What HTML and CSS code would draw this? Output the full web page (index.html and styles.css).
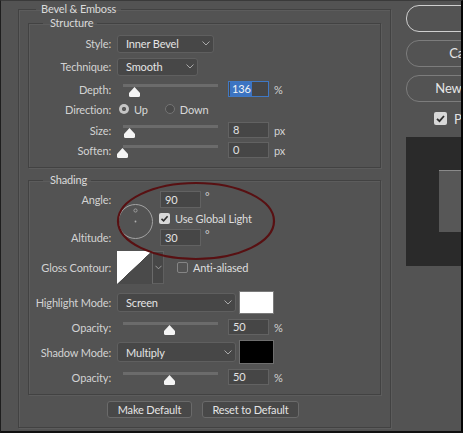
FILE: index.html
```html
<!DOCTYPE html>
<html lang="en">
<head>
<meta charset="utf-8">
<title>Layer Style - Bevel &amp; Emboss</title>
<link rel="stylesheet" href="styles.css">
</head>
<body>
<div class="frame">
  <div class="left">
    <fieldset class="group outer">
      <legend class="lg-outer">Bevel &amp; Emboss</legend>

      <fieldset class="group inner structure">
        <legend class="lg-inner">Structure</legend>

        <div class="row r-style">
          <span class="lbl">Style:</span>
          <div class="select w-style"><span class="sel-text">Inner Bevel</span><svg class="chev" viewBox="0 0 8 5"><polyline points="0.5,0.5 4,4 7.5,0.5"/></svg></div>
        </div>

        <div class="row r-tech">
          <span class="lbl">Technique:</span>
          <div class="select w-tech"><span class="sel-text">Smooth</span><svg class="chev" viewBox="0 0 8 5"><polyline points="0.5,0.5 4,4 7.5,0.5"/></svg></div>
        </div>

        <div class="row r-depth">
          <span class="lbl">Depth:</span>
          <div class="slider"><div class="track"></div><svg class="thumb" style="left:12px" viewBox="0 0 11 10"><path d="M5.5 0 L11 6 L11 8.5 Q11 10 9.5 10 L1.5 10 Q0 10 0 8.5 L0 6 Z"/></svg></div>
          <div class="num focus"><span class="sel">136</span></div>
          <span class="unit">%</span>
        </div>

        <div class="row r-dir">
          <span class="lbl">Direction:</span>
          <span class="radio on"></span><span class="rtext up">Up</span>
          <span class="radio off"></span><span class="rtext">Down</span>
        </div>

        <div class="row r-size">
          <span class="lbl">Size:</span>
          <div class="slider"><div class="track"></div><svg class="thumb" style="left:7px" viewBox="0 0 11 10"><path d="M5.5 0 L11 6 L11 8.5 Q11 10 9.5 10 L1.5 10 Q0 10 0 8.5 L0 6 Z"/></svg></div>
          <div class="num">8</div>
          <span class="unit">px</span>
        </div>

        <div class="row r-soft">
          <span class="lbl">Soften:</span>
          <div class="slider"><div class="track"></div><svg class="thumb" style="left:0px" viewBox="0 0 11 10"><path d="M5.5 0 L11 6 L11 8.5 Q11 10 9.5 10 L1.5 10 Q0 10 0 8.5 L0 6 Z"/></svg></div>
          <div class="num">0</div>
          <span class="unit">px</span>
        </div>
      </fieldset>

      <fieldset class="group inner shading">
        <legend class="lg-inner">Shading</legend>

        <div class="angle-grid">
          <span class="lbl g-angle">Angle:</span>
          <svg class="dial" viewBox="0 0 37 37"><circle cx="18.5" cy="18.5" r="17" class="dial-ring"/><circle cx="18.5" cy="7.5" r="1.6" class="dial-knob"/><circle cx="18.5" cy="18.5" r="0.9" class="dial-dot"/></svg>
          <div class="num g-angle-in">90</div>
          <span class="deg g-angle-deg">°</span>
          <div class="g-global"><span class="cb checked"><svg viewBox="0 0 11 11"><polyline points="2.5,5.8 4.6,7.8 8.6,3.2"/></svg></span><span class="cbtext">Use Global Light</span></div>
          <span class="lbl g-alt">Altitude:</span>
          <div class="num g-alt-in">30</div>
          <span class="deg g-alt-deg">°</span>
        </div>

        <div class="row r-contour">
          <span class="lbl">Gloss Contour:</span>
          <div class="contour"><div class="curve"></div><div class="curve-drop"><svg class="chev" viewBox="0 0 8 5"><polyline points="0.5,0.5 4,4 7.5,0.5"/></svg></div></div>
          <span class="cb empty"></span><span class="cbtext">Anti-aliased</span>
        </div>

        <div class="row r-hmode">
          <span class="lbl">Highlight Mode:</span>
          <div class="select w-mode"><span class="sel-text">Screen</span><svg class="chev" viewBox="0 0 8 5"><polyline points="0.5,0.5 4,4 7.5,0.5"/></svg></div>
          <div class="swatch white"></div>
        </div>

        <div class="row r-op1">
          <span class="lbl">Opacity:</span>
          <div class="slider"><div class="track"></div><svg class="thumb" style="left:47px" viewBox="0 0 11 10"><path d="M5.5 0 L11 6 L11 8.5 Q11 10 9.5 10 L1.5 10 Q0 10 0 8.5 L0 6 Z"/></svg></div>
          <div class="num">50</div>
          <span class="unit">%</span>
        </div>

        <div class="row r-smode">
          <span class="lbl">Shadow Mode:</span>
          <div class="select w-mode tall"><span class="sel-text">Multiply</span><svg class="chev" viewBox="0 0 8 5"><polyline points="0.5,0.5 4,4 7.5,0.5"/></svg></div>
          <div class="swatch black"></div>
        </div>

        <div class="row r-op2">
          <span class="lbl">Opacity:</span>
          <div class="slider"><div class="track"></div><svg class="thumb" style="left:47px" viewBox="0 0 11 10"><path d="M5.5 0 L11 6 L11 8.5 Q11 10 9.5 10 L1.5 10 Q0 10 0 8.5 L0 6 Z"/></svg></div>
          <div class="num">50</div>
          <span class="unit">%</span>
        </div>
      </fieldset>

      <div class="btnrow">
        <button class="btn b-make">Make Default</button>
        <button class="btn b-reset">Reset to Default</button>
      </div>
    </fieldset>
  </div>

  <div class="right">
    <div class="pill primary">OK</div>
    <div class="pill">Cancel</div>
    <div class="pill">New Style...</div>
    <div class="preview-row"><span class="cb checked big"><svg viewBox="0 0 13 13"><polyline points="3,6.8 5.5,9.2 10,4"/></svg></span><span class="ptext">Preview</span></div>
    <div class="preview"><div class="preview-swatch"></div></div>
  </div>

  <svg class="mark" viewBox="0 0 160 80"><ellipse cx="80" cy="40" rx="78" ry="38"/></svg>
</div>
</body>
</html>
```

FILE: styles.css
```css
html, body {
  margin: 0;
  padding: 0;
  background: #535353;
}

body {
  font-family: "Lato", "Liberation Sans", sans-serif;
  font-size: 11px;
  letter-spacing: -0.15px;
  color: #d4d4d4;
}

.frame {
  position: relative;
  width: 463px;
  height: 433px;
  box-sizing: border-box;
  border-top: 1px solid #3a3a3a;
  border-left: 1px solid #1e1e1e;
  border-right: 2px solid #050505;
  border-bottom: 2px solid #101010;
  background: #535353;
  display: flex;
  align-items: flex-start;
  overflow: hidden;
}

/* ---------- fieldsets ---------- */
.group {
  margin: 0;
  min-width: 0;
  border: 1px solid #424242;
  box-shadow: 1px 1px 0 #5c5c5c, inset 1px 1px 0 #5c5c5c;
}

.group legend {
  line-height: 14px;
  height: 14px;
  color: #dadada;
  font-size: 11px;
}

.outer {
  margin: 1px 0 0 17px;
  width: 373px;
  box-sizing: border-box;
  padding: 0 9px 9px 9px;
  flex-shrink: 0;
}

.lg-outer {
  margin-left: 8px;
  padding: 0 5px;
}

.inner {
  width: 353px;
  box-sizing: border-box;
  padding: 0 0 9px 0;
}

.lg-inner {
  margin-left: 14px;
  padding: 0 4px 0 7px;
}

.shading {
  margin-top: 5px;
}

/* ---------- rows ---------- */
.row {
  display: flex;
  align-items: center;
}

.lbl {
  width: 82px;
  margin-right: 6px;
  text-align: right;
  flex-shrink: 0;
  white-space: nowrap;
  color: #d2d2d2;
}

.r-style { margin-top: 4px; height: 19px; }
.r-tech  { margin-top: 4px; height: 19px; }
.r-depth { margin-top: 5px; height: 16px; }
.r-dir   { margin-top: 4px; height: 16px; }
.r-size  { margin-top: 5px; height: 16px; }
.r-soft  { margin-top: 4px; height: 16px; }

.r-contour { margin-top: 5px; height: 33px; }
.r-hmode   { margin-top: 7px; height: 23px; }
.r-op1     { margin-top: 5px; height: 16px; }
.r-smode   { margin-top: 5px; height: 24px; }
.r-op2     { margin-top: 5px; height: 16px; }

/* ---------- select ---------- */
.select {
  box-sizing: border-box;
  height: 18px;
  background: #474747;
  border: 1px solid #5f5f5f;
  border-radius: 3px;
  display: flex;
  align-items: center;
  justify-content: space-between;
  padding: 0 3px 0 8px;
  color: #e4e4e4;
}

.select.tall { height: 20px; }

.w-style { width: 97px; }
.w-tech  { width: 81px; }
.w-mode  { width: 119px; height: 19px; }

.chev {
  width: 8px;
  height: 5px;
  fill: none;
  stroke: #a9a9a9;
  stroke-width: 1;
}

/* ---------- slider ---------- */
.slider {
  position: relative;
  width: 105px;
  height: 16px;
  flex-shrink: 0;
}

.track {
  margin: 3px 0 0 6px;
  width: 95px;
  height: 3px;
  background: #6b6b6b;
}

.thumb {
  position: absolute;
  top: 6px;
  width: 11px;
  height: 10px;
  fill: #f4f4f4;
}

/* ---------- numeric inputs ---------- */
.num {
  box-sizing: border-box;
  width: 41px;
  height: 16px;
  margin-left: 6px;
  background: #464646;
  border: 1px solid #626262;
  padding-left: 4px;
  line-height: 14px;
  color: #e2e2e2;
  flex-shrink: 0;
}

.num.focus {
  border-color: #3f78c4;
  padding-left: 1px;
}

.sel {
  display: inline-block;
  background: #3c74c2;
  color: #f4f4f4;
  padding: 0 1px 0 2px;
  line-height: 14px;
}

.unit {
  margin-left: 5px;
  color: #d2d2d2;
}

/* ---------- radios ---------- */
.radio {
  box-sizing: border-box;
  width: 10px;
  height: 10px;
  border-radius: 50%;
  flex-shrink: 0;
}

.radio.on {
  margin-left: 2px;
  background: radial-gradient(circle, #595959 0 1.8px, #c4c4c4 2.4px);
}

.radio.off {
  margin-left: 17px;
  border: 1px solid #747474;
  background: #4a4a4a;
}

.rtext { margin-left: 5px; color: #d8d8d8; }
.rtext.up { margin-left: 5px; }

/* ---------- angle block ---------- */
.angle-grid {
  margin-top: 4px;
  display: grid;
  grid-template-columns: 82px 37px 41px auto;
  grid-template-rows: 17px 15px 17px;
  column-gap: 6px;
  row-gap: 3px;
  align-items: center;
}

.angle-grid .lbl { width: auto; margin-right: 0; }

.g-angle { grid-column: 1; grid-row: 1; }
.g-alt   { grid-column: 1; grid-row: 3; }

.dial {
  grid-column: 2;
  grid-row: 1 / 4;
  width: 37px;
  height: 37px;
  margin-top: 6px;
}

.dial-ring { fill: none; stroke: #a3a3a3; stroke-width: 1; }
.dial-knob { fill: none; stroke: #a3a3a3; stroke-width: 0.9; }
.dial-dot  { fill: #b0b0b0; }

.angle-grid .num {
  margin-left: 0;
  height: 17px;
  line-height: 15px;
}

.g-angle-in { grid-column: 3; grid-row: 1; }
.g-alt-in   { grid-column: 3; grid-row: 3; }

.deg {
  align-self: start;
  margin-left: -2px;
  line-height: 11px;
  color: #d2d2d2;
}

.g-angle-deg { grid-column: 4; grid-row: 1; }
.g-alt-deg   { grid-column: 4; grid-row: 3; }

.g-global {
  grid-column: 3 / 5;
  grid-row: 2;
  display: flex;
  align-items: center;
  margin-left: -1px;
  white-space: nowrap;
}

/* ---------- checkboxes ---------- */
.cb {
  box-sizing: border-box;
  width: 11px;
  height: 11px;
  border-radius: 2px;
  flex-shrink: 0;
  display: inline-flex;
}

.cb svg {
  width: 100%;
  height: 100%;
  fill: none;
  stroke: #2e2e2e;
  stroke-width: 1.6;
}

.cb.checked { background: #d8d8d8; }

.cb.empty {
  margin-left: 13px;
  border: 1px solid #858585;
}

.cb.big {
  width: 13px;
  height: 13px;
  border-radius: 2px;
}

.cb.big svg { stroke-width: 1.8; }

.cbtext {
  margin-left: 5px;
  color: #dedede;
  white-space: nowrap;
}

/* ---------- contour ---------- */
.contour {
  display: flex;
  height: 33px;
  width: 47px;
  box-sizing: border-box;
  flex-shrink: 0;
}

.curve {
  position: relative;
  width: 35px;
  height: 33px;
  background: linear-gradient(to bottom right, #ffffff 0 49.5%, #4a4a4a 50.5% 100%);
}

.curve::after {
  content: "";
  position: absolute;
  right: 0;
  top: 0;
  width: 2px;
  height: 1px;
  background: #d0302a;
}

.curve-drop {
  width: 12px;
  box-sizing: border-box;
  border: 1px solid #606060;
  border-left-color: #6a6a6a;
  background: #474747;
  display: flex;
  align-items: center;
  justify-content: center;
}

.curve-drop .chev { width: 7px; }

/* ---------- swatches ---------- */
.swatch {
  box-sizing: border-box;
  width: 35px;
  margin-left: 3px;
  border: 1px solid #6e6e6e;
  flex-shrink: 0;
}

.swatch.white { height: 23px; background: #ffffff; border-color: #7a7a7a; }
.swatch.black { height: 24px; background: #000000; }

/* ---------- buttons ---------- */
.btnrow {
  display: flex;
  justify-content: flex-start;
  gap: 10px;
  margin-top: 6px;
  padding-left: 79px;
}

.btn {
  box-sizing: border-box;
  height: 17px;
  margin: 0;
  padding: 0;
  font-family: inherit;
  font-size: 11px;
  letter-spacing: -0.15px;
  line-height: 15px;
  color: #e4e4e4;
  background: #484848;
  border: 1px solid #6a6a6a;
  border-radius: 3px;
}

.b-make  { width: 85px; }
.b-reset { width: 97px; }

/* ---------- right column ---------- */
.right {
  margin-left: 15px;
  width: 124px;
  flex-shrink: 0;
  display: flex;
  flex-direction: column;
}

.pill {
  box-sizing: border-box;
  height: 27px;
  margin-top: 8px;
  border: 1px solid #7c7c7c;
  border-radius: 13px;
  font-size: 13px;
  line-height: 25px;
  text-align: center;
  color: #e6e6e6;
}

.pill.primary {
  margin-top: 4px;
  border: 1.5px solid #cfcfcf;
  color: #535353;
}

.preview-row {
  margin-top: 10px;
  height: 13px;
  display: flex;
  align-items: center;
  padding-left: 28px;
}

.ptext {
  margin-left: 7px;
  font-size: 13px;
  color: #e2e2e2;
  white-space: nowrap;
}

.preview {
  margin-top: 12px;
  height: 129px;
  background: #2a2a2a;
  padding: 33px 0 0 33px;
  box-sizing: border-box;
}

.preview-swatch {
  width: 62px;
  height: 62px;
  box-sizing: border-box;
  background: #575757;
  border-top: 1px solid #8a8a8a;
}

/* ---------- annotation ellipse ---------- */
.mark {
  position: absolute;
  left: 115px;
  top: 180px;
  width: 160px;
  height: 80px;
  fill: none;
  stroke: #581012;
  stroke-width: 2.2;
}
```
